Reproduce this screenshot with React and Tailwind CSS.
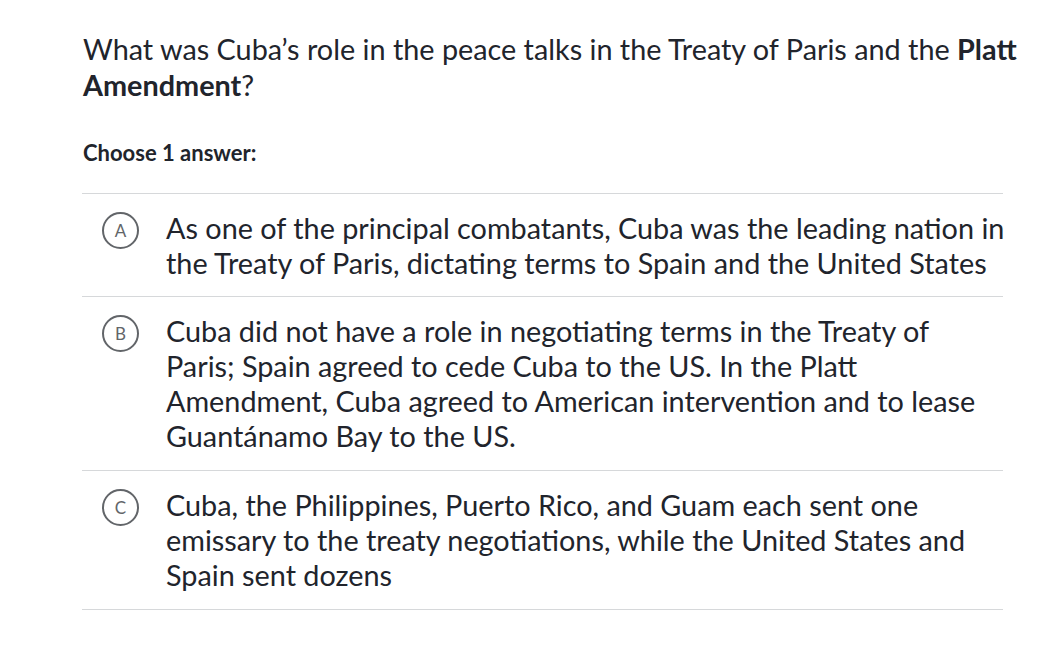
import React from "react";

const choices = [
  {
    letter: "A",
    pb: "pb-[15px]",
    lines: [
      "As one of the principal combatants, Cuba was the leading nation in",
      "the Treaty of Paris, dictating terms to Spain and the United States",
    ],
  },
  {
    letter: "B",
    pb: "pb-[16px]",
    lines: [
      "Cuba did not have a role in negotiating terms in the Treaty of",
      "Paris; Spain agreed to cede Cuba to the US. In the Platt",
      "Amendment, Cuba agreed to American intervention and to lease",
      "Guantánamo Bay to the US.",
    ],
  },
  {
    letter: "C",
    pb: "pb-[16px]",
    lines: [
      "Cuba, the Philippines, Puerto Rico, and Guam each sent one",
      "emissary to the treaty negotiations, while the United States and",
      "Spain sent dozens",
    ],
  },
];

export default function App() {
  return (
    <div
      className="min-h-[669px] w-full bg-white pl-[82px] pt-[31px] text-[#21242c]"
      style={{ fontFamily: "Lato, 'Noto Sans', sans-serif" }}
    >
      <h1 className="text-[28.8px] leading-[36px] font-normal pl-px whitespace-nowrap">
        What was Cuba’s role in the peace talks in the Treaty of Paris and the <b className="font-bold">Platt</b>
        <br />
        <b className="font-bold">Amendment</b>?
      </h1>
      <div className="mt-[37px] pl-px text-[22px] leading-[26px] font-bold">Choose 1 answer:</div>
      <ul className="mt-[27px] w-[921px] border-t border-[#d6d8da]">
        {choices.map((c) => (
          <li key={c.letter} className={`flex items-start border-b border-[#d6d8da] pt-[17px] ${c.pb}`}>
            <div className="ml-[20px] mt-[1px] flex h-[37px] w-[37px] shrink-0 items-center justify-center rounded-full border-2 border-[#626569] text-[17px] leading-none text-[#626569]">
              {c.letter}
            </div>
            <div className="ml-[27px] text-[28.8px] leading-[35px] whitespace-nowrap">
              {c.lines.map((l, i) => (
                <div key={i}>{l}</div>
              ))}
            </div>
          </li>
        ))}
      </ul>
    </div>
  );
}
